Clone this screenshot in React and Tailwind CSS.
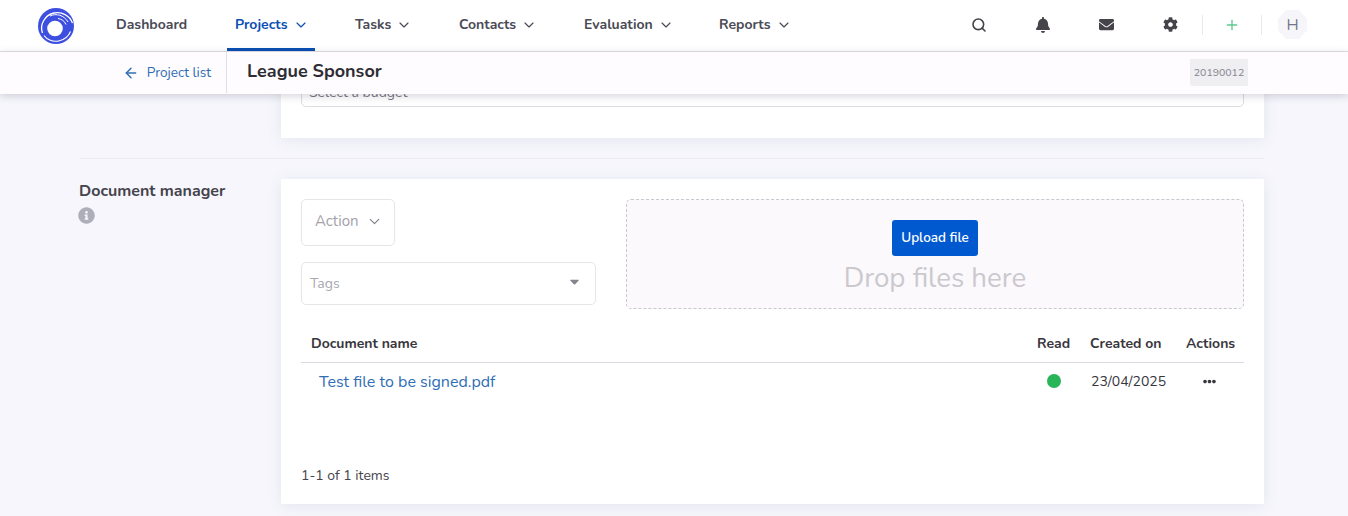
import { ArrowLeft, ChevronDown, Plus, Search } from "lucide-react";
import { FaBell, FaCaretDown, FaCog, FaEllipsisH, FaEnvelope, FaInfoCircle } from "react-icons/fa";

const font = "font-['Nunito','Lato','Noto_Sans',sans-serif]";

const menu = [
  { label: "Dashboard", width: "w-[119px]", plain: true },
  { label: "Projects", width: "w-[88px]", active: true },
  { label: "Tasks", width: "ml-[32px] w-[104px]" },
  { label: "Contacts", width: "w-[125px]" },
  { label: "Evaluation", width: "w-[135px]" },
  { label: "Reports", width: "w-[90px]" },
];

function Logo() {
  return (
    <svg viewBox="0 0 36 36" className="h-9 w-9" fill="none">
      <circle cx="18" cy="18" r="18" fill="#3d4fe0" />
      <path d="M4.500 25c-3-8 2-18 11.500-20 8-1.600 15.500 2.500 18.500 10" stroke="#fff" strokeWidth="1.300" />
      <path d="M6 27.500c3 4.500 9 6.500 14.500 5.500 5.500-1 10-4.500 12-9.500" stroke="#fff" strokeWidth="1.100" />
      <path d="M12 8c6-3 14-1 18 6" stroke="#fff" strokeWidth="1" />
      <path d="M20 10.500c3.500.5 6.500 2.500 8 6" stroke="#fff" strokeWidth="1" />
      <circle cx="17" cy="20.500" r="7.800" fill="#fff" />
    </svg>
  );
}

function NavItem({ item }) {
  return (
    <div className={`relative flex h-[51px] items-center gap-[5px] pb-0.5 pl-2 ${item.width}`}>
      <span className={`text-[14px] font-bold ${item.active ? "text-[#0a4fb3]" : "text-[#4a4a55]"}`}>
        {item.label}
      </span>
      {!item.plain && (
        <ChevronDown size={16} strokeWidth={1.75} className={item.active ? "text-[#0a4fb3]" : "text-[#4a4a55]"} />
      )}
      {item.active && <div className="absolute inset-x-0 bottom-0 h-[3px] bg-[#0a4fb3]" />}
    </div>
  );
}

function Header() {
  return (
    <header className="flex h-[52px] items-center border-b border-[#e0dfe4] bg-white pl-[38px] pr-[41px]">
      <Logo />
      <nav className="ml-[34px] flex items-center">
        {menu.map((item) => (
          <NavItem key={item.label} item={item} />
        ))}
      </nav>
      <div className="ml-auto flex items-center pb-0.5 text-[#46434b]">
        <Search size={16} strokeWidth={2.4} />
        <FaBell size={16} className="ml-[48px]" />
        <FaEnvelope size={15} className="ml-[48px]" />
        <FaCog size={15} className="ml-[49px]" />
        <div className="ml-[24px] h-[20px] w-px bg-[#e8e7eb]" />
        <Plus size={16} strokeWidth={2} className="ml-[21px] text-[#5cc98c]" />
        <div className="ml-[21px] h-[20px] w-px bg-[#e8e7eb]" />
        <div className="ml-[16px] flex h-[29px] w-[29px] items-center justify-center bg-[#f6f5f9] text-[16px] text-[#75758a] [clip-path:polygon(28%_0,72%_0,100%_30%,100%_70%,72%_100%,28%_100%,0_70%,0_30%)]">
          H
        </div>
      </div>
    </header>
  );
}

function SubHeader() {
  return (
    <div className="relative z-10 flex h-[42px] items-center bg-[#fefcff] pb-px shadow-[0_2px_8px_rgba(60,55,80,0.22)]">
      <div className="flex h-full w-[227px] items-center justify-end gap-2 border-r border-[#e0dfe4] pr-[15px] text-[13.6px] text-[#2f6db5]">
        <ArrowLeft size={16} strokeWidth={2.2} />
        <span className="mt-px">Project list</span>
      </div>
      <h1 className="-mt-0.5 ml-[20px] text-[18px] font-bold text-[#2e2d33]">League Sponsor</h1>
      <div className="ml-auto mr-[100px] flex h-[27px] w-[58px] items-center justify-center rounded-bl-[3px] bg-[#efeef1] text-[10.5px] text-[#85838c]">
        20190012
      </div>
    </div>
  );
}

function BudgetCard() {
  return (
    <div className="flex">
      <div className="w-[202px]" />
      <div className="-mt-[29px] h-[73px] w-[983px] bg-white px-5 pt-[13px] shadow-[0_2px_14px_rgba(90,85,130,0.1)]">
        <div className="flex h-[29px] items-center rounded-b-[5px] border border-[#dddce3] px-[7px] text-[14px] text-[#77757e]">
          Select a budget
        </div>
      </div>
    </div>
  );
}

function DocumentCard() {
  return (
    <div className="h-[325px] w-[983px] bg-white px-5 pt-5 shadow-[0_2px_14px_rgba(90,85,130,0.1)]">
      <div className="flex justify-between">
        <div className="w-[295px]">
          <div className="flex h-[47px] w-[94px] items-center justify-between rounded-[5px] border border-[#e6e5ea] pb-0.5 pl-[13px] pr-[11px] text-[15px] text-[#a3a2aa]">
            Action
            <ChevronDown size={17} strokeWidth={1.75} className="text-[#85838c]" />
          </div>
          <div className="mt-4 flex h-[43px] items-center justify-between rounded-[5px] border border-[#e6e5ea] pl-2 pr-[13px] text-[14px] text-[#a9a8af]">
            Tags
            <FaCaretDown size={15} className="-mt-[5px] text-[#85838c]" />
          </div>
        </div>
        <div className="flex h-[110px] w-[618px] flex-col items-center rounded-[5px] border border-dashed border-[#c9c8ce] bg-[#fbf9fc] pt-5">
          <button className="flex h-[36px] w-[86px] items-center justify-center rounded-[3px] bg-[#0059cf] text-[13.5px] font-semibold text-white">
            Upload file
          </button>
          <p className="mt-1 text-[27.7px] leading-[36px] text-[#cbc9ce]">Drop files here</p>
        </div>
      </div>

      <div className="mt-5 flex h-[34px] items-center border-b border-[#d9d9e3] pb-1 text-[14px] font-bold text-[#38363d]">
        <div className="flex-1 pl-[10px]">Document name</div>
        <div className="w-[53px]">Read</div>
        <div className="w-[95px]">Created on</div>
        <div className="w-[59px] pl-px">Actions</div>
      </div>
      <div className="flex h-[37px] items-center text-[14px] text-[#38363d]">
        <div className="flex-1 pl-[18px] text-[16px] text-[#2f6db5]">Test file to be signed.pdf</div>
        <div className="-mt-px w-[53px] pl-[9px]">
          <div className="h-[14px] w-[14px] rounded-full bg-[#27b558]" />
        </div>
        <div className="w-[95px]">23/04/2025</div>
        <div className="w-[58px] pl-[17px]">
          <FaEllipsisH size={13} className="text-[#38363d]" />
        </div>
      </div>
      <p className="mt-[65px] text-[14px] text-[#46434b]">1-1 of 1 items</p>
    </div>
  );
}

export default function App() {
  return (
    <div className={`h-[516px] overflow-hidden bg-[#f6f6fc] ${font}`}>
      <Header />
      <SubHeader />
      <main className="pl-[79px]">
        <BudgetCard />
        <div className="ml-px mt-5 h-px w-[1184px] bg-[#ecebf3]" />
        <section className="mt-5 flex">
          <div className="w-[202px]">
            <h2 className="text-[16px] font-bold leading-[24px] text-[#45434c]">Document manager</h2>
            <FaInfoCircle size={17} className="-ml-px mt-[4px] text-[#aeaeb9]" />
          </div>
          <DocumentCard />
        </section>
      </main>
    </div>
  );
}
